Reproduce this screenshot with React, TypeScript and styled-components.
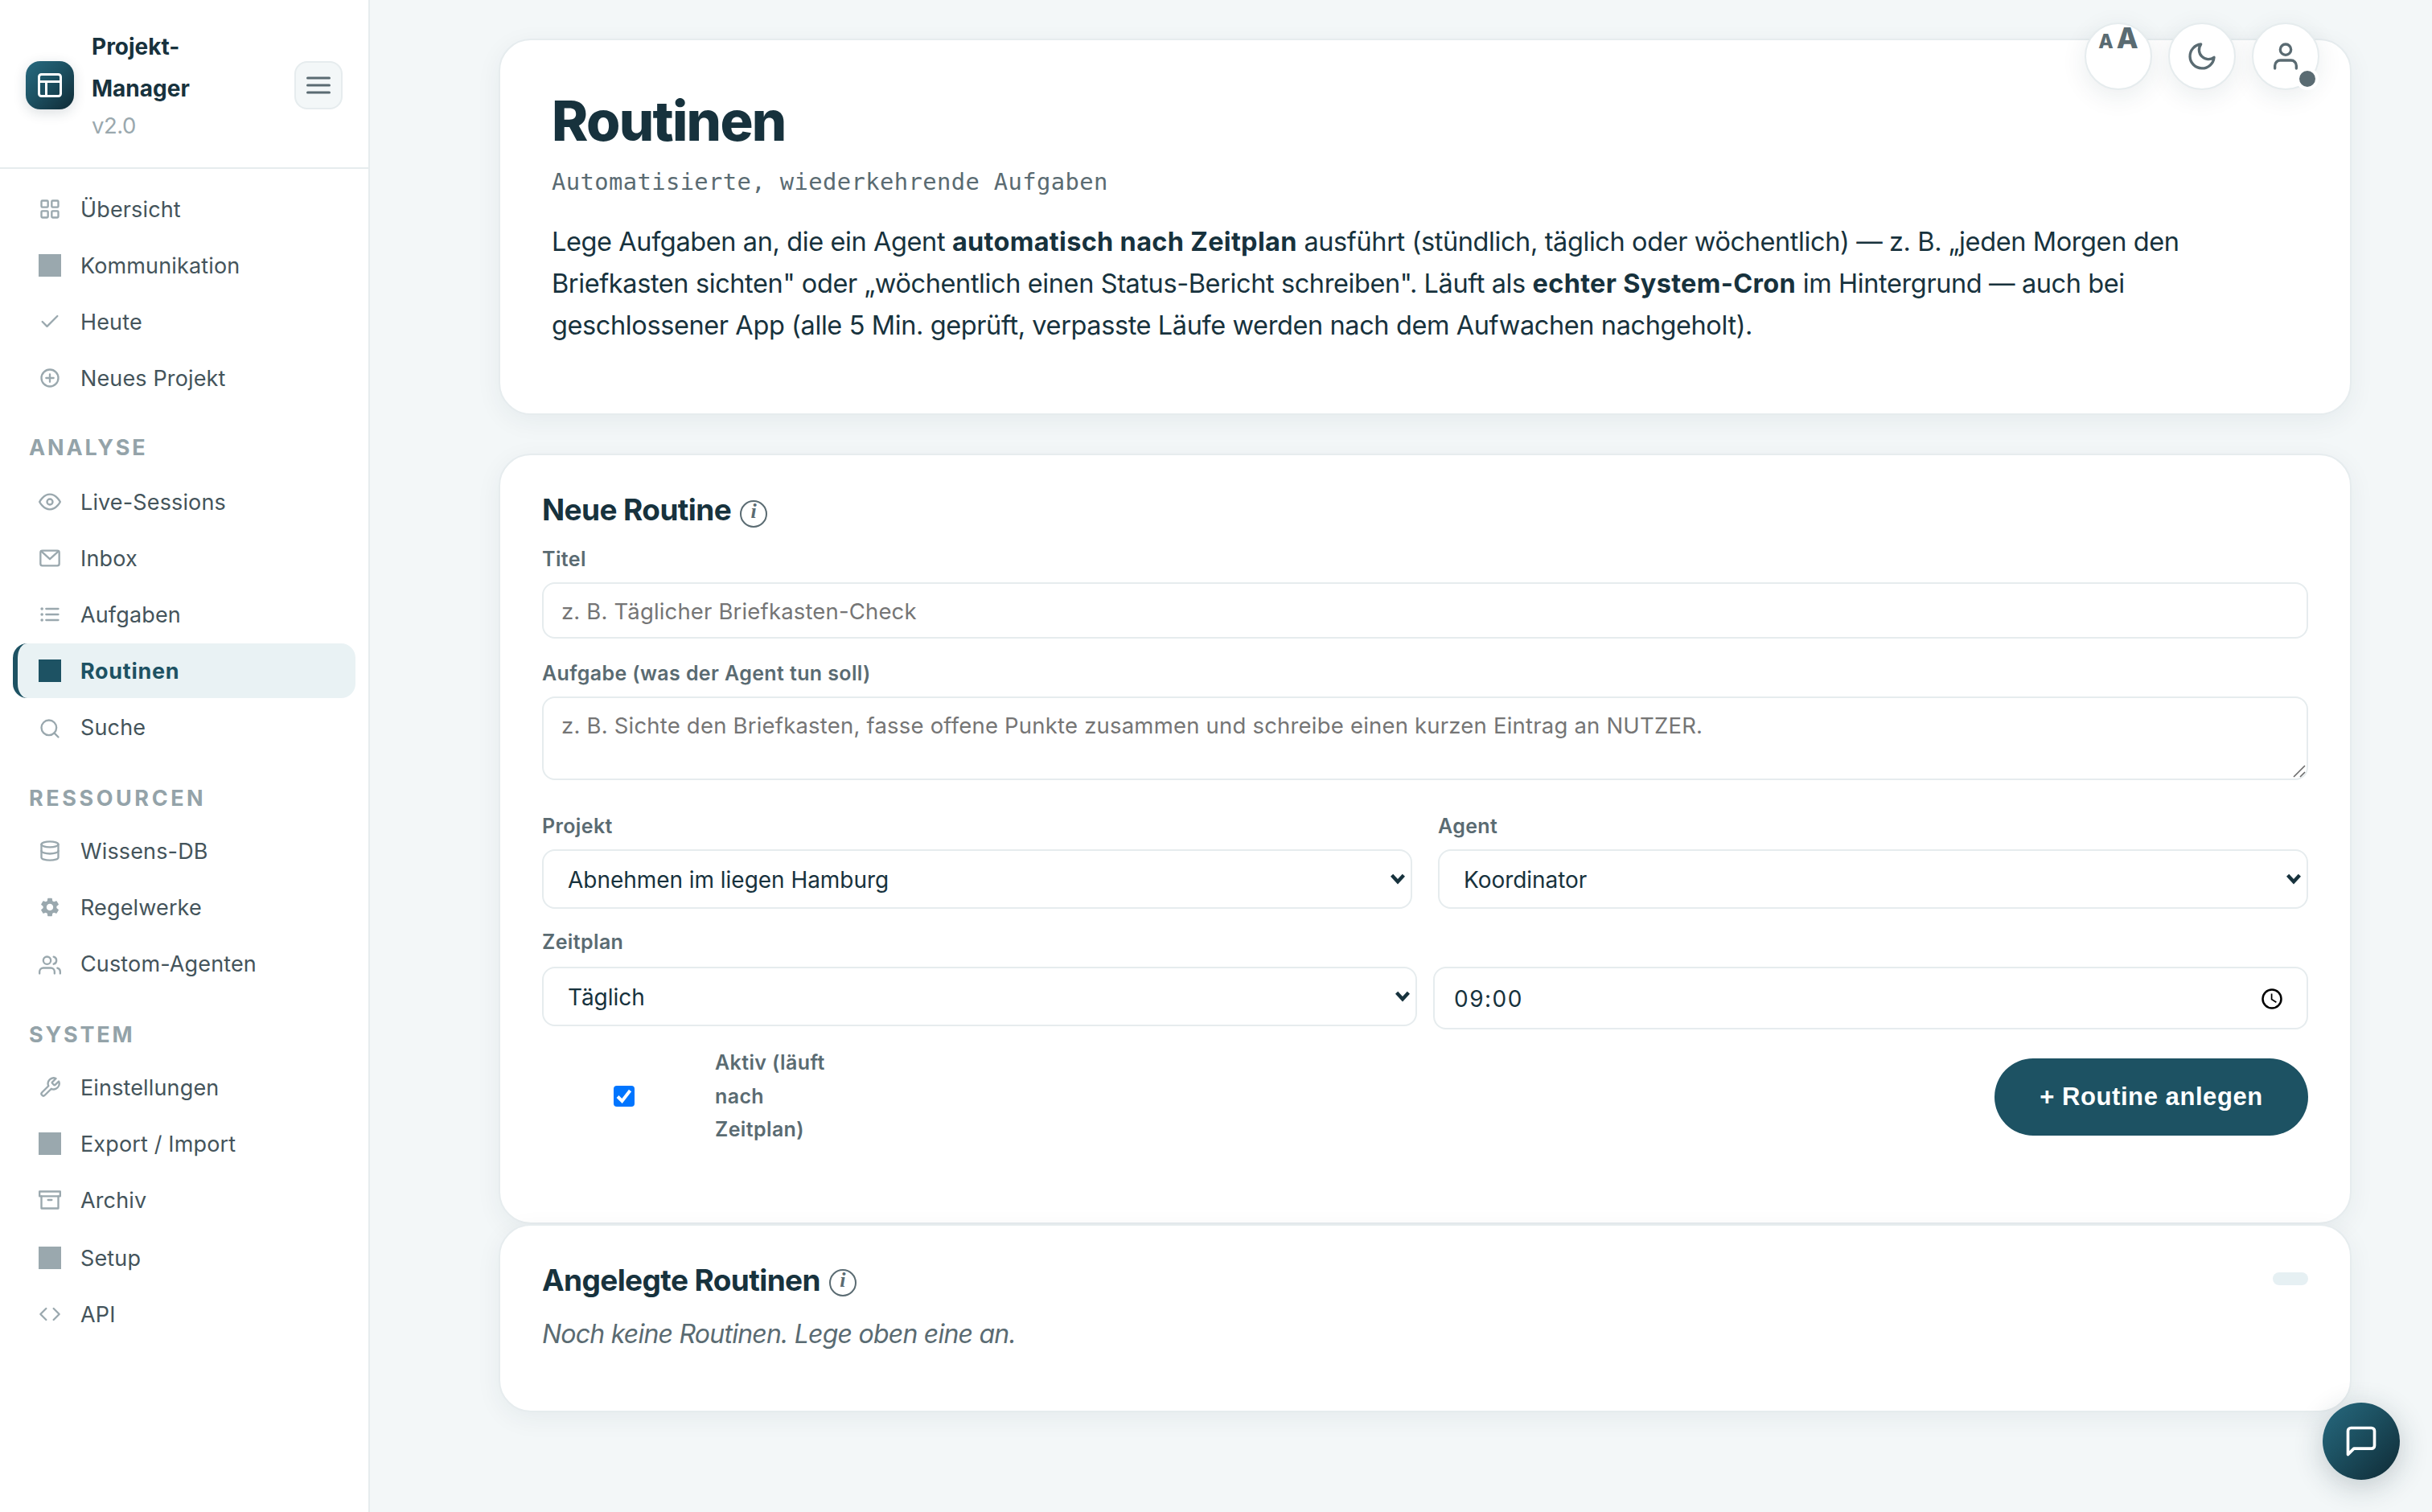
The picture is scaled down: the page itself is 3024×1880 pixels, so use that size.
import React from "react";
import styled, { createGlobalStyle, css } from "styled-components";

const color = {
  page: "#f3f7f8",
  line: "#e6ecee",
  ink: "#17323d",
  nav: "#44545b",
  muted: "#5a6b72",
  faint: "#9aa8ae",
  section: "#94a3a9",
  accent: "#1d5263",
  accentSoft: "#e9f2f4",
};

const sans = `Inter, "Liberation Sans", sans-serif`;

const GlobalStyle = createGlobalStyle`
  *, *::before, *::after { box-sizing: border-box; }
  body { margin: 0; background: ${color.page}; font-family: ${sans}; color: ${color.ink}; }
  h1, h2, p { margin: 0; }
  button, input, textarea { font: inherit; color: inherit; }
`;

const Shell = styled.div`
  display: grid;
  grid-template-columns: 460px 1fr;
  height: 1880px;
  overflow: hidden;
`;

/* ---------- Sidebar ---------- */

const Sidebar = styled.aside`
  background: #fff;
  border-right: 2px solid ${color.line};
`;

const Brand = styled.header`
  display: flex;
  align-items: flex-start;
  height: 210px;
  padding: 32px 32px 0;
  border-bottom: 2px solid ${color.line};
`;

const BrandMark = styled.div`
  display: grid;
  place-items: center;
  width: 60px;
  height: 60px;
  margin: 44px 22px 0 0;
  border-radius: 18px;
  color: #fff;
  background: linear-gradient(135deg, #27697f 0%, #1d5263 45%, #0f2a35 100%);
  box-shadow: 0 4px 16px rgba(23, 50, 61, 0.16);
`;

const BrandText = styled.div`
  flex: 1;
  font-size: 28px;
  line-height: 52px;
  font-weight: 700;
`;

const BrandName = styled.div`
  width: 140px;
`;

const Version = styled.div`
  font-size: 27.500px;
  line-height: 41px;
  font-weight: 400;
  letter-spacing: -0.500px;
  color: ${color.faint};
`;

const MenuButton = styled.button`
  display: grid;
  place-items: center;
  width: 60px;
  height: 60px;
  margin: 44px 0 0;
  padding: 0;
  border: 2px solid ${color.line};
  border-radius: 16px;
  background: ${color.page};
  color: ${color.muted};
`;

const Nav = styled.nav`
  display: flex;
  flex-direction: column;
  padding: 16px 16px 0;
`;

const NavItem = styled.a<{ $active?: boolean; $space?: boolean }>`
  display: flex;
  align-items: center;
  gap: 24px;
  height: 68px;
  margin: ${(p) => (p.$space ? "2px" : "0")} 0 2px;
  padding-left: 26px;
  border-left: 6px solid transparent;
  border-radius: 18px;
  font-size: 27px;
  letter-spacing: 0.140px;
  color: ${color.nav};
  svg { color: ${color.faint}; }
  ${(p) =>
    p.$active &&
    css`
      border-left-color: ${color.accent};
      background: ${color.accentSoft};
      color: ${color.accent};
      font-weight: 700;
      letter-spacing: 0.7px;
      svg { color: ${color.accent}; }
    `}
`;

const NavSection = styled.div<{ $tracking: number; $offset: number }>`
  height: 84px;
  padding: ${(p) => p.$offset}px 0 0 20px;
  font-size: 27px;
  line-height: 36px;
  font-weight: 700;
  letter-spacing: ${(p) => p.$tracking}px;
  color: ${color.section};
`;

const Glyph = styled.svg<{ $size: number; $drop?: boolean }>`
  flex: none;
  width: ${(p) => p.$size}px;
  height: ${(p) => p.$size}px;
  margin-top: ${(p) => (p.$drop ? "4px" : "0")};
  fill: none;
  stroke: currentColor;
  stroke-width: 2;
  stroke-linecap: round;
  stroke-linejoin: round;
`;

type IconName = keyof typeof shapes;

const shapes = {
  grid: (
    <>
      <rect x="3" y="3" width="7" height="7" rx="1" />
      <rect x="14" y="3" width="7" height="7" rx="1" />
      <rect x="14" y="14" width="7" height="7" rx="1" />
      <rect x="3" y="14" width="7" height="7" rx="1" />
    </>
  ),
  block: <rect x="0" y="0" width="24" height="24" fill="currentColor" stroke="none" />,
  check: <path d="M20 6 9 17l-5-5" />,
  plus: (
    <>
      <circle cx="12" cy="12" r="9" />
      <path d="M12 8v8M8 12h8" />
    </>
  ),
  eye: (
    <>
      <path d="M1 12s4-8 11-8 11 8 11 8-4 8-11 8-11-8-11-8z" />
      <circle cx="12" cy="12" r="3" />
    </>
  ),
  mail: (
    <>
      <rect x="2" y="4" width="20" height="16" rx="2" />
      <path d="M2.6 4.4 12 13l9.400-8.600" />
    </>
  ),
  list: (
    <>
      <path d="M8 6h13M8 12h13M8 18h13" />
      <path d="M3.500 6h.1M3.500 12h.1M3.500 18h.1" strokeWidth="3" />
    </>
  ),
  search: (
    <>
      <circle cx="11" cy="11" r="8" />
      <path d="m21 21-4.350-4.350" />
    </>
  ),
  database: (
    <>
      <ellipse cx="12" cy="5" rx="9" ry="3" />
      <path d="M21 12c0 1.660-4 3-9 3s-9-1.340-9-3" />
      <path d="M3 5v14c0 1.660 4 3 9 3s9-1.340 9-3V5" />
    </>
  ),
  gear: (
    <path
      fill="currentColor"
      stroke="none"
      d="M19.140 12.940c.04-.3.060-.61.060-.94 0-.32-.02-.64-.07-.94l2.030-1.580c.18-.14.230-.41.120-.61l-1.920-3.320c-.12-.22-.37-.29-.59-.22l-2.390.96c-.5-.38-1.030-.7-1.620-.94l-.36-2.540c-.04-.24-.24-.41-.48-.41h-3.840c-.24 0-.43.170-.47.410l-.36 2.540c-.59.240-1.130.570-1.620.940l-2.390-.96c-.22-.08-.47 0-.59.220L2.740 8.870c-.12.210-.08.470.120.610l2.030 1.580c-.05.300-.09.630-.09.940s.02.640.070.940l-2.030 1.580c-.18.140-.23.410-.12.610l1.920 3.320c.12.220.37.290.59.220l2.390-.96c.5.380 1.030.7 1.620.940l.36 2.540c.05.240.24.410.48.410h3.840c.24 0 .44-.17.470-.41l.36-2.540c.59-.24 1.130-.56 1.620-.94l2.390.960c.22.080.47 0 .59-.22l1.920-3.320c.12-.22.070-.47-.12-.61l-2.010-1.580zM12 15.600c-1.980 0-3.600-1.620-3.600-3.600s1.620-3.600 3.600-3.600 3.600 1.620 3.600 3.600-1.620 3.600-3.600 3.600z"
    />
  ),
  users: (
    <>
      <path d="M17 21v-2a4 4 0 0 0-4-4H5a4 4 0 0 0-4 4v2" />
      <circle cx="9" cy="7" r="4" />
      <path d="M23 21v-2a4 4 0 0 0-3-3.870M16 3.130a4 4 0 0 1 0 7.750" />
    </>
  ),
  tool: (
    <path d="M14.700 6.300a1 1 0 0 0 0 1.400l1.600 1.600a1 1 0 0 0 1.400 0l3.770-3.770a6 6 0 0 1-7.940 7.940l-6.910 6.910a2.120 2.120 0 0 1-3-3l6.910-6.910a6 6 0 0 1 7.940-7.940l-3.760 3.760z" />
  ),
  archive: (
    <>
      <path d="M21 8v13H3V8" />
      <rect x="1" y="3" width="22" height="5" />
      <path d="M10 12h4" />
    </>
  ),
  code: <path d="m16 18 6-6-6-6M8 6l-6 6 6 6" />,
  layout: (
    <>
      <rect x="3" y="3" width="18" height="18" rx="2" />
      <path d="M3 9h18M9 21V9" />
    </>
  ),
  menu: <path d="M3 6h18M3 12h18M3 18h18" />,
  moon: <path d="M21 12.790A9 9 0 1 1 11.210 3 7 7 0 0 0 21 12.790z" />,
  user: (
    <>
      <path d="M20 21v-2a4 4 0 0 0-4-4H8a4 4 0 0 0-4 4v2" />
      <circle cx="12" cy="7" r="4" />
    </>
  ),
  chat: <path d="M21 15a2 2 0 0 1-2 2H7l-4 4V5a2 2 0 0 1 2-2h14a2 2 0 0 1 2 2z" />,
};

function Icon({ name, size = 28, drop }: { name: IconName; size?: number; drop?: boolean }) {
  return (
    <Glyph viewBox="0 0 24 24" $size={size} $drop={drop} aria-hidden>
      {shapes[name]}
    </Glyph>
  );
}

/* ---------- Content ---------- */

const Main = styled.main`
  display: flex;
  flex-direction: column;
  padding: 48px 100px 0 160px;
`;

const Card = styled.section`
  border: 2px solid ${color.line};
  border-radius: 40px;
  background: #fff;
  box-shadow: 0 8px 32px rgba(23, 50, 61, 0.06);
`;

const HeroCard = styled(Card)`
  height: 468px;
  margin-bottom: 48px;
  padding: 61px 64px 0;
`;

const FormCard = styled(Card)`
  height: 958px;
  padding: 46px 52px 0;
`;

const ListCard = styled(Card)`
  height: 234px;
  padding: 46px 52px 0;
`;

const PageTitle = styled.h1`
  font-size: 68.500px;
  line-height: 80px;
  font-weight: 800;
  letter-spacing: -1.700px;
`;

const PageSubtitle = styled.p`
  margin-top: 11px;
  font-family: "DejaVu Sans Mono", monospace;
  font-size: 28.800px;
  line-height: 48px;
  letter-spacing: 0.400px;
  color: ${color.muted};
`;

const Lead = styled.p`
  margin-top: 25px;
  font-size: 32.500px;
  line-height: 52px;
  letter-spacing: -0.400px;
  white-space: nowrap;
  strong { font-weight: 700; letter-spacing: 0.300px; }
`;

const CardHead = styled.div`
  display: flex;
  align-items: flex-start;
  height: 44px;
`;

const CardTitle = styled.h2`
  font-size: 37px;
  line-height: 44px;
  font-weight: 700;
  letter-spacing: -0.600px;
`;

const InfoDot = styled.span<{ $top: number }>`
  width: 34px;
  height: 34px;
  margin: ${(p) => p.$top}px 0 0 11px;
  border: 2px solid ${color.muted};
  border-radius: 50%;
  font: italic 700 26px/23px "Liberation Serif", serif;
  text-align: center;
  color: ${color.muted};
`;

const CountPill = styled.span`
  width: 44px;
  height: 16px;
  margin: 12px 0 0 auto;
  border-radius: 8px;
  background: #e6f0f3;
`;

const Empty = styled.p`
  margin-top: 19px;
  font-size: 32px;
  line-height: 52px;
  font-style: italic;
  letter-spacing: -0.770px;
  color: ${color.muted};
`;

const Label = styled.label<{ $top: number; $gap?: number }>`
  display: block;
  margin: ${(p) => p.$top}px 0 ${(p) => p.$gap ?? 9}px;
  font-size: 25px;
  line-height: 40px;
  font-weight: 600;
  letter-spacing: 0.380px;
  color: ${color.muted};
`;

const control = css`
  display: block;
  width: 100%;
  border: 2px solid ${color.line};
  border-radius: 16px;
  background: #fff;
  outline: none;
`;

const TextInput = styled.input`
  ${control}
  height: 70px;
  padding: 1px 22px 0;
  font-size: 27.500px;
  letter-spacing: 0.160px;
  &::placeholder { color: #757575; opacity: 1; }
`;

const TextAreaWrap = styled.div`
  position: relative;
`;

const TextArea = styled.textarea`
  ${control}
  height: 104px;
  padding: 14px 22px;
  font-size: 27.500px;
  line-height: 40px;
  letter-spacing: 0.200px;
  resize: none;
  overflow: hidden;
  &::placeholder { color: #757575; opacity: 1; }
`;

const ResizeGrip = styled.svg`
  position: absolute;
  right: 3px;
  bottom: 3px;
  width: 16px;
  height: 16px;
  fill: none;
  stroke: #6b6b6b;
  stroke-width: 1.600;
`;

const FieldRow = styled.div<{ $gap: number }>`
  display: grid;
  grid-template-columns: 1fr 1fr;
  align-items: start;
  column-gap: ${(p) => p.$gap}px;
`;

const Picker = styled.button`
  ${control}
  display: flex;
  align-items: center;
  justify-content: space-between;
  height: 74px;
  padding: 2px 7px 0 30px;
  font-size: 28px;
  letter-spacing: -0.040px;
  text-align: left;
`;

const TimeField = styled(Picker)`
  height: 78px;
  padding: 1px 30px 0 24px;
  letter-spacing: 1.500px;
`;

const Chevron = styled.svg`
  width: 18px;
  height: 14px;
  margin-top: -3px;
  fill: none;
  stroke: ${color.ink};
  stroke-width: 4.400;
`;

const Clock = styled.svg`
  width: 26px;
  height: 26px;
  fill: none;
  stroke: #000;
  stroke-width: 2.500;
`;

const Actions = styled.div`
  display: flex;
  align-items: flex-start;
  justify-content: space-between;
  margin-top: 20px;
`;

const ActiveToggle = styled.label`
  display: flex;
  align-items: center;
  gap: 11px;
  margin-top: 1px;
  font-size: 25px;
  line-height: 41.600px;
  font-weight: 600;
  letter-spacing: 0.380px;
  color: ${color.muted};
`;

const CheckCell = styled.span`
  display: grid;
  place-items: center;
  width: 204px;
`;

const CheckBox = styled.span`
  display: grid;
  place-items: center;
  width: 26px;
  height: 26px;
  border-radius: 4px;
  background: #0075ff;
  svg { width: 26px; height: 26px; fill: none; stroke: #fff; stroke-width: 4; }
`;

const ToggleText = styled.span`
  width: 150px;
`;

const SubmitButton = styled.button`
  width: 390px;
  height: 96px;
  margin: 16px 0 0;
  padding: 0;
  border: 0;
  border-radius: 48px;
  background: ${color.accent};
  color: #fff;
  font: 700 31px "Liberation Sans", Arial, sans-serif;
  letter-spacing: 0.570px;
`;

/* ---------- Floating controls ---------- */

const TopControls = styled.div`
  position: absolute;
  top: 28px;
  right: 140px;
  display: flex;
  gap: 20px;
`;

const RoundButton = styled.button`
  position: relative;
  display: flex;
  align-items: center;
  justify-content: center;
  width: 84px;
  height: 84px;
  padding: 0;
  border: 2px solid ${color.line};
  border-radius: 50%;
  background: #fff;
  color: ${color.muted};
  box-shadow: 0 8px 32px rgba(23, 50, 61, 0.09);
`;

const TextSizeButton = styled(RoundButton)`
  align-items: baseline;
  gap: 4px;
  font-weight: 800;
  line-height: 35px;
`;

const Letter = styled.span<{ $size: number }>`
  font-size: ${(p) => p.$size}px;
`;

const StatusDot = styled.span`
  position: absolute;
  right: -1px;
  bottom: -2px;
  width: 28px;
  height: 28px;
  border: 4px solid #fff;
  border-radius: 50%;
  background: ${color.muted};
`;

const ChatButton = styled.button`
  position: absolute;
  top: 1744px;
  right: 40px;
  display: grid;
  place-items: center;
  width: 96px;
  height: 96px;
  padding: 0;
  border: 0;
  border-radius: 50%;
  color: #fff;
  background: linear-gradient(135deg, #27697f 0%, #1d5263 40%, #0f2a35 100%);
  box-shadow: 0 8px 36px rgba(23, 50, 61, 0.24);
`;

/* ---------- Data ---------- */

type Item = { label: string; icon: IconName; active?: boolean; drop?: boolean; space?: boolean };
type Group = { title?: string; tracking?: number; offset?: number; items: Item[] };

const groups: Group[] = [
  {
    items: [
      { label: "Übersicht", icon: "grid" },
      { label: "Kommunikation", icon: "block" },
      { label: "Heute", icon: "check" },
      { label: "Neues Projekt", icon: "plus" },
    ],
  },
  {
    title: "ANALYSE",
    tracking: 2.85,
    offset: 33,
    items: [
      { label: "Live-Sessions", icon: "eye" },
      { label: "Inbox", icon: "mail" },
      { label: "Aufgaben", icon: "list" },
      { label: "Routinen", icon: "block", active: true },
      { label: "Suche", icon: "search", drop: true },
    ],
  },
  {
    title: "RESSOURCEN",
    tracking: 3.55,
    offset: 35,
    items: [
      { label: "Wissens-DB", icon: "database" },
      { label: "Regelwerke", icon: "gear" },
      { label: "Custom-Agenten", icon: "users", drop: true },
    ],
  },
  {
    title: "SYSTEM",
    tracking: 2.8,
    offset: 35,
    items: [
      { label: "Einstellungen", icon: "tool" },
      { label: "Export / Import", icon: "block" },
      { label: "Archiv", icon: "archive" },
      { label: "Setup", icon: "block", space: true },
      { label: "API", icon: "code" },
    ],
  },
];

function Select({ value }: { value: string }) {
  return (
    <Picker type="button">
      {value}
      <Chevron viewBox="0 0 18 14">
        <path d="m1.600 2.200 7.400 8 7.400-8" />
      </Chevron>
    </Picker>
  );
}

export default function App() {
  return (
    <>
      <GlobalStyle />
      <Shell>
        <Sidebar>
          <Brand>
            <BrandMark>
              <Icon name="layout" size={36} />
            </BrandMark>
            <BrandText>
              <BrandName>Projekt-Manager</BrandName>
              <Version>v2.0</Version>
            </BrandText>
            <MenuButton type="button" aria-label="Menü">
              <Icon name="menu" size={36} />
            </MenuButton>
          </Brand>
          <Nav>
            {groups.map((group, i) => (
              <React.Fragment key={i}>
                {group.title && (
                  <NavSection $tracking={group.tracking ?? 3} $offset={group.offset ?? 33}>
                    {group.title}
                  </NavSection>
                )}
                {group.items.map((item) => (
                  <NavItem key={item.label} $active={item.active} $space={item.space}>
                    <Icon name={item.icon} drop={item.drop} />
                    {item.label}
                  </NavItem>
                ))}
              </React.Fragment>
            ))}
          </Nav>
        </Sidebar>

        <Main>
          <HeroCard>
            <PageTitle>Routinen</PageTitle>
            <PageSubtitle>Automatisierte, wiederkehrende Aufgaben</PageSubtitle>
            <Lead>
              Lege Aufgaben an, die ein Agent <strong>automatisch nach Zeitplan</strong> ausführt (stündlich, täglich
              oder wöchentlich) — z. B. „jeden Morgen den
              <br />
              Briefkasten sichten" oder „wöchentlich einen Status-Bericht schreiben". Läuft als{" "}
              <strong>echter System-Cron</strong> im Hintergrund — auch bei
              <br />
              geschlossener App (alle 5 Min. geprüft, verpasste Läufe werden nach dem Aufwachen nachgeholt).
            </Lead>
          </HeroCard>

          <FormCard>
            <CardHead>
              <CardTitle>Neue Routine</CardTitle>
              <InfoDot $top={10}>i</InfoDot>
            </CardHead>
            <Label $top={19}>Titel</Label>
            <TextInput placeholder="z. B. Täglicher Briefkasten-Check" />
            <Label $top={23}>Aufgabe (was der Agent tun soll)</Label>
            <TextAreaWrap>
              <TextArea placeholder="z. B. Sichte den Briefkasten, fasse offene Punkte zusammen und schreibe einen kurzen Eintrag an NUTZER." />
              <ResizeGrip viewBox="0 0 16 16">
                <path d="M1 15 15 1M9 15l6-6" />
              </ResizeGrip>
            </TextAreaWrap>
            <FieldRow $gap={32}>
              <div>
                <Label $top={37}>Projekt</Label>
                <Select value="Abnehmen im liegen Hamburg" />
              </div>
              <div>
                <Label $top={37}>Agent</Label>
                <Select value="Koordinator" />
              </div>
            </FieldRow>
            <Label $top={21} $gap={11}>Zeitplan</Label>
            <FieldRow $gap={20}>
              <Select value="Täglich" />
              <TimeField type="button">
                09:00
                <Clock viewBox="0 0 26 26">
                  <circle cx="13" cy="13" r="11.500" />
                  <path d="M12.600 6.500v7l5.800 3.700" strokeWidth="1.700" />
                </Clock>
              </TimeField>
            </FieldRow>
            <Actions>
              <ActiveToggle>
                <CheckCell>
                  <CheckBox>
                    <svg viewBox="0 0 26 26">
                      <path d="m5 13.500 5.500 5.500L20.500 6" />
                    </svg>
                  </CheckBox>
                </CheckCell>
                <ToggleText>Aktiv (läuft nach Zeitplan)</ToggleText>
              </ActiveToggle>
              <SubmitButton type="button">+ Routine anlegen</SubmitButton>
            </Actions>
          </FormCard>

          <ListCard>
            <CardHead>
              <CardTitle>Angelegte Routinen</CardTitle>
              <InfoDot $top={8}>i</InfoDot>
              <CountPill />
            </CardHead>
            <Empty>Noch keine Routinen. Lege oben eine an.</Empty>
          </ListCard>
        </Main>
      </Shell>

      <TopControls>
        <TextSizeButton type="button">
          <Letter $size={24}>A</Letter>
          <Letter $size={35}>A</Letter>
        </TextSizeButton>
        <RoundButton type="button" aria-label="Dunkelmodus">
          <Icon name="moon" size={40} />
        </RoundButton>
        <RoundButton type="button" aria-label="Konto">
          <Icon name="user" size={40} />
          <StatusDot />
        </RoundButton>
      </TopControls>

      <ChatButton type="button" aria-label="Chat">
        <Icon name="chat" size={44} />
      </ChatButton>
    </>
  );
}
